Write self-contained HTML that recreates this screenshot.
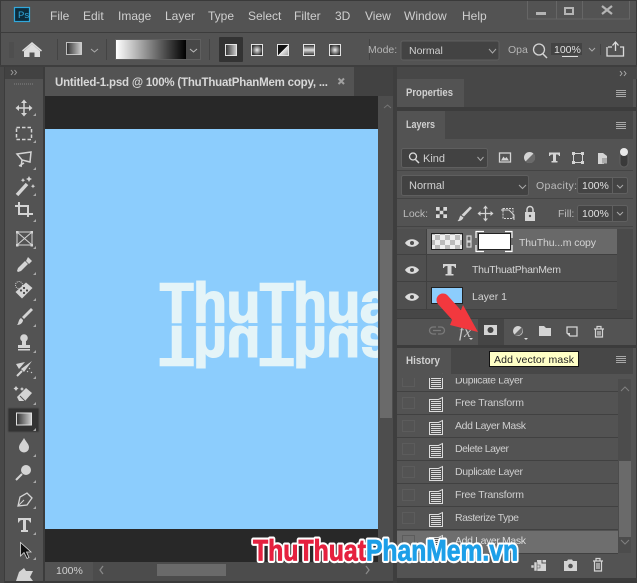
<!DOCTYPE html>
<html><head><meta charset="utf-8"><style>
html,body{margin:0;padding:0;background:#535353;width:637px;height:583px;overflow:hidden}
svg{display:block}
text{font-family:"Liberation Sans",sans-serif;font-size:11px;fill:#d0d0d0}
.m{font-size:12px;fill:#cfcfcf}
.b{font-weight:bold}
.i{fill:#d4d4d4;stroke:none}
.s{fill:none;stroke:#d4d4d4;stroke-width:1.5}
</style></head><body>
<svg width="637" height="583" viewBox="0 0 637 583" xmlns="http://www.w3.org/2000/svg">
<rect width="637" height="583" fill="#535353"/>
<rect x="0" y="0" width="637" height="1" fill="#3a3a3a"/>
<rect x="0" y="0" width="1" height="583" fill="#3a3a3a"/>
<rect x="636" y="0" width="1" height="583" fill="#3a3a3a"/>
<rect x="0" y="581" width="637" height="2" fill="#3a3a3a"/>
<!-- title/menu -->
<rect x="14.500" y="7.500" width="15" height="14" fill="#0c2c3c" stroke="#31a8dc" stroke-width="1.200"/>
<text x="18" y="18" style="font-size:9.500px;fill:#31a8dc">Ps</text>
<text class="m" x="50" y="20">File</text><text class="m" x="83" y="20">Edit</text><text class="m" x="118" y="20">Image</text><text class="m" x="165" y="20">Layer</text><text class="m" x="208" y="20">Type</text><text class="m" x="248" y="20">Select</text><text class="m" x="294" y="20">Filter</text><text class="m" x="335" y="20">3D</text><text class="m" x="365" y="20">View</text><text class="m" x="404" y="20">Window</text><text class="m" x="462" y="20">Help</text>
<path d="M527.500 1V19H629.500V1M556.500 1V19M582.500 1V19" fill="none" stroke="#666"/>
<rect x="536" y="12" width="10" height="3" fill="#b4b4b4"/>
<rect x="565" y="8" width="8" height="6" fill="none" stroke="#b4b4b4" stroke-width="2"/>
<path d="M602 6L612 14M612 6L602 14" stroke="#b4b4b4" stroke-width="2.200" fill="none"/>
<rect x="0" y="32" width="637" height="1" fill="#3c3c3c"/>
<!-- options -->
<path d="M9 43h5M9 45h5M9 47h5M9 49h5M9 51h5M9 53h5M9 55h5M9 57h5" stroke="#484848" stroke-width="1"/>
<path d="M32 44L24 51V57H29.500V52.500H34.500V57H40V51Z" fill="#dcdcdc"/><path d="M22.500 51L32 43L41.500 51" fill="none" stroke="#dcdcdc" stroke-width="1.500"/>
<path d="M57.500 39V60M106.500 39V60M209.500 39V60M369.500 39V60" stroke="#444"/>
<defs>
<linearGradient id="g1"><stop offset="0" stop-color="#fff"/><stop offset="1" stop-color="#000"/></linearGradient>
<linearGradient id="g2"><stop offset="0" stop-color="#303030"/><stop offset="1" stop-color="#d0d0d0"/></linearGradient>
<radialGradient id="g3"><stop offset="0" stop-color="#eee"/><stop offset="1" stop-color="#333"/></radialGradient>
<linearGradient id="g4" x1="0" y1="0" x2="0" y2="1"><stop offset="0" stop-color="#222"/><stop offset=".5" stop-color="#ddd"/><stop offset="1" stop-color="#222"/></linearGradient>
<linearGradient id="g5" x1="0" y1="0" x2="1" y2="1"><stop offset="0" stop-color="#111"/><stop offset=".5" stop-color="#111"/><stop offset=".5" stop-color="#eee"/><stop offset="1" stop-color="#999"/></linearGradient>
<pattern id="ck" width="10" height="10" patternUnits="userSpaceOnUse"><rect width="10" height="10" fill="#eee"/><rect width="5" height="5" fill="#bbb"/><rect x="5" y="5" width="5" height="5" fill="#bbb"/></pattern>
</defs>
<rect x="66.500" y="42.500" width="15" height="12" fill="url(#g2)" stroke="#ddd" stroke-width=".8"/>
<path d="M91 49L94.500 52L98 49" stroke="#aaa" fill="none"/>
<rect x="115.500" y="39.500" width="85" height="20" fill="#484848" stroke="#5f5f5f"/>
<rect x="116" y="40" width="70" height="19" fill="url(#g1)"/>
<path d="M190 49L193.500 52L197 49" stroke="#bbb" fill="none"/>
<rect x="219" y="37" width="24" height="25" rx="1" fill="#333"/>
<rect x="225.500" y="44.500" width="11" height="11" fill="url(#g2)" stroke="#e4e4e4"/>
<rect x="251.500" y="44.500" width="11" height="11" fill="url(#g3)" stroke="#e4e4e4"/>
<rect x="277.500" y="44.500" width="11" height="11" fill="url(#g5)" stroke="#e4e4e4"/>
<rect x="303.500" y="44.500" width="11" height="11" fill="url(#g4)" stroke="#e4e4e4"/>
<rect x="329.500" y="44.500" width="11" height="11" fill="url(#g3)" stroke="#e4e4e4"/>
<text x="368" y="53" style="font-size:10.500px;fill:#b4b4b4">Mode:</text>
<rect x="401" y="41" width="98" height="19" rx="2" fill="#434343" stroke="#5f5f5f"/>
<text x="409" y="54" style="font-size:10.500px;fill:#d0d0d0">Normal</text>
<path d="M489 49L492.500 53L496 49" stroke="#aaa" fill="none"/>
<text x="508" y="53" style="font-size:10.500px;fill:#b4b4b4">Opa</text>
<circle cx="539" cy="49.500" r="5.500" fill="none" stroke="#d4d4d4" stroke-width="1.300"/><path d="M543 54L547 58" stroke="#d4d4d4" stroke-width="1.500"/>
<rect x="551" y="43" width="31" height="12" fill="#434343"/>
<text x="554" y="53" style="font-size:10.500px;fill:#e0e0e0">100%</text>
<path d="M562 56.500H578" stroke="#ddd"/>
<path d="M589 48L592 51L595 48" stroke="#aaa" fill="none"/>
<path d="M600.500 44V55" stroke="#444"/>
<path d="M608 47H612M620 47H623.500V56H607V47" fill="none" stroke="#dcdcdc" stroke-width="1.300"/><path d="M615.500 51V43M612.500 45.500L615.500 42L618.500 45.500" fill="none" stroke="#dcdcdc" stroke-width="1.300"/>
<rect x="0" y="65" width="637" height="2" fill="#3e3e3e"/>
<!-- left tools -->
<rect x="0" y="67" width="4" height="516" fill="#484848"/>
<rect x="4" y="67" width="1" height="516" fill="#3c3c3c"/>
<rect x="5" y="67" width="39" height="12" fill="#424242"/>
<path d="M11 70L13 72.500L11 75M14.500 70L16.500 72.500L14.500 75" fill="none" stroke="#9a9a9a"/>
<path d="M14 84h20" stroke="#6b6b6b" stroke-width="2" stroke-dasharray="1 1"/>
<rect x="43" y="67" width="2" height="516" fill="#3c3c3c"/>
<g>
<path class="s" d="M24 101V115M17 108H31"/><path class="i" d="M24 99.500L27 103H21ZM24 116.500L27 113H21ZM15.500 108L19 105V111ZM32.500 108L29 105V111Z"/>
<rect x="16.500" y="127.500" width="15" height="12" fill="none" stroke="#d4d4d4" stroke-width="1.500" stroke-dasharray="3.500 2"/>
<path class="s" d="M17 154L31 152L30 162L22 160L17 154ZM22 160L21 167M24 163L19 166"/>
<path d="M17 195L27 184" stroke="#d4d4d4" stroke-width="3.500"/><path class="i" d="M29 176l1 2 2 1-2 1-1 2-1-2-2-1 2-1zM23 178l.7 1.500 1.500.7-1.500.7-.7 1.500-.7-1.500-1.500-.7 1.500-.7zM33 184l.7 1.500 1.500.7-1.500.7-.7 1.500-.7-1.500-1.500-.7 1.500-.7z"/>
<path class="s" d="M15 206H28V217M19 202V214H33" style="stroke-width:2"/>
<rect x="17" y="232" width="15" height="13" fill="none" stroke="#d4d4d4"/><path d="M17 232L32 245M32 232L17 245" stroke="#d4d4d4"/><rect x="16" y="231" width="2.500" height="2.500" class="i"/><rect x="30.500" y="231" width="2.500" height="2.500" class="i"/><rect x="16" y="244" width="2.500" height="2.500" class="i"/><rect x="30.500" y="244" width="2.500" height="2.500" class="i"/>
<path class="i" d="M28 257L32 261L29 264L26 261ZM25 261L28 264L21 271L18 272L17 271L18 268Z"/>
<path class="i" d="M15.500 292L26 282.500L32.500 288L22 298.500Z"/><path d="M21 290.500h.01M24 288h.01M24 293h.01M27 290.500h.01" stroke="#444" stroke-width="2.200" stroke-linecap="round"/><circle cx="19" cy="285" r="3.500" fill="none" stroke="#d4d4d4" stroke-dasharray="1 1"/>
<path class="i" d="M31 308L33 310L24 319L22 317ZM21 318L23 320C23 323 20 325 17 325C19 323 18 320 21 318Z"/>
<circle class="i" cx="24" cy="338" r="3.800"/><rect class="i" x="22" y="340" width="4" height="5"/><rect class="i" x="18" y="345" width="12" height="3"/><rect class="i" x="18" y="349" width="12" height="1.500"/>
<path class="i" d="M16 364L25 362L19 369ZM32 361L24 372L21 369Z"/><path d="M17 376L22 371" stroke="#d4d4d4" stroke-width="2"/><path d="M27 371l1 1M29 368l1 1M31 372l1 1" stroke="#d4d4d4"/>
<path class="i" d="M26 388L32 393L25 401L19 401L17 397Z"/><path class="i" d="M16 386l1 1.500 1.500 1-1.500 1-1 1.500-1-1.500-1.500-1 1.500-1zM22 387l.7 1.300 1.300.7-1.300.7-.7 1.300-.7-1.300-1.300-.7 1.300-.7z"/><path d="M20 396L25 401" stroke="#535353"/>
<rect x="8" y="408" width="31" height="24" rx="1" fill="#333" stroke="#4a4a4a"/>
<rect x="16.500" y="413" width="15" height="12" fill="url(#g2)" stroke="#e0e0e0"/>
<path class="i" d="M24 438C26 442 29 444 29 447.500A5 5 0 0 1 19 447.500C19 444 22 442 24 438Z"/>
<circle class="i" cx="26" cy="470" r="5"/><path d="M22 474L16 480" stroke="#d4d4d4" stroke-width="2"/>
<path class="s" d="M18 506L20 497L27 493L32 498L27 505Z" style="stroke-width:1.300"/><path d="M18 506L24 500" stroke="#d4d4d4"/>
<path class="i" d="M18 518H31V522.500H30C29.500 520.500 28.500 520 26 520V530H28V532H21V530H23V520C20.500 520 19.500 520.500 19 522.500H18Z"/>
<path d="M20.500 542.500V556L24 552.500L27 558.500L29 557.500L26.500 552H31Z" fill="#111" stroke="#ddd" stroke-width=".8"/>
<path class="i" d="M16 581L19 572L24 568L26 571L33 571L30 577L33 581Z"/>
</g>
<path d="M36 113l-3 3h3zM36 140l-3 3h3zM36 167l-3 3h3zM36 193l-3 3h3zM36 219l-3 3h3zM36 246l-3 3h3zM36 272l-3 3h3zM36 298l-3 3h3zM36 324l-3 3h3zM36 350l-3 3h3zM36 376l-3 3h3zM36 402l-3 3h3zM36 428l-3 3h3zM36 454l-3 3h3zM36 480l-3 3h3zM36 506l-3 3h3zM36 532l-3 3h3zM36 557l-3 3h3z" fill="#a8a8a8"/>
<!-- tabs -->
<rect x="45" y="67" width="348" height="29" fill="#424242"/>
<rect x="45" y="67" width="309" height="29" fill="#535353"/>
<text x="55" y="86" class="b" textLength="273" lengthAdjust="spacing" style="font-size:11.500px;fill:#d8d8d8">Untitled-1.psd @ 100% (ThuThuatPhanMem copy, ...</text>
<path d="M338.500 78.500L344 84M344 78.500L338.500 84" stroke="#a0a0a0" stroke-width="2"/>
<!-- doc -->
<rect x="45" y="96" width="333" height="466" fill="#282828"/>
<rect x="45" y="129" width="333" height="400" fill="#8ccdfd"/>
<svg x="45" y="129" width="333" height="400" viewBox="45 129 333 400" overflow="hidden">
<text transform="translate(160,322) scale(.975,1)" style="font-weight:bold;font-size:56px;fill:#e4f4f8;stroke:#e4f4f8;stroke-width:2px">ThuThua</text>
<text transform="translate(160,327) scale(.975,-1)" style="font-weight:bold;font-size:56px;fill:#e4f4f8;stroke:#e4f4f8;stroke-width:2px">ThuThua</text>
</svg>
<!-- vertical scroll -->
<rect x="378" y="96" width="15" height="466" fill="#4d4d4d"/>
<path d="M384 108L387.500 105L391 108" stroke="#757575" fill="none"/>
<rect x="380" y="240" width="12" height="178" fill="#6a6a6a"/>
<!-- status -->
<rect x="45" y="562" width="348" height="19" fill="#4c4c4c"/>
<rect x="45" y="562" width="48" height="19" fill="#535353"/>
<text x="56" y="574" style="font-size:10.500px;fill:#d0d0d0">100%</text>
<path d="M103 566L100 570L103 574" stroke="#888" fill="none" stroke-width="1.300"/>
<path d="M366 566L369 570L366 574" stroke="#888" fill="none" stroke-width="1.300"/>
<rect x="157" y="564" width="69" height="12" fill="#6a6a6a"/>
<rect x="393" y="67" width="4" height="516" fill="#3e3e3e"/>
<!-- right panels -->
<rect x="397" y="67" width="240" height="12" fill="#474747"/>
<path d="M620 71L622 73.500L620 76M624 71L626 73.500L624 76" fill="none" stroke="#a8a8a8"/>
<rect x="397" y="79" width="236" height="28" fill="#474747"/>
<rect x="397" y="79" width="67" height="28" fill="#535353"/>
<text class="b" x="406" y="96" textLength="47" lengthAdjust="spacingAndGlyphs">Properties</text>
<path d="M616 90.500H626M616 92.500H626M616 94.500H626M616 96.500H626" stroke="#a8a8a8"/>
<rect x="397" y="107" width="240" height="4" fill="#3c3c3c"/>
<rect x="397" y="111" width="236" height="28" fill="#474747"/>
<rect x="397" y="111" width="48" height="28" fill="#535353"/>
<text class="b" x="406" y="128" textLength="29" lengthAdjust="spacingAndGlyphs">Layers</text>
<path d="M616 122.500H626M616 124.500H626M616 126.500H626M616 128.500H626" stroke="#a8a8a8"/>
<!-- kind -->
<rect x="401.500" y="148.500" width="86" height="19" rx="2" fill="#424242" stroke="#5f5f5f"/>
<circle cx="413" cy="156.500" r="3.500" fill="none" stroke="#dcdcdc" stroke-width="1.300"/><path d="M415.500 159.500L419 163" stroke="#dcdcdc" stroke-width="1.500"/>
<text x="423" y="162" style="font-size:11px">Kind</text>
<path d="M477.500 157L480.500 160.500L483.500 157" stroke="#aaa" fill="none"/>
<rect x="499.500" y="153" width="11" height="9" fill="none" stroke="#d4d4d4" stroke-width="1.300"/><path class="i" d="M501 160.500L503.500 156.500L505 158.500L506.500 157L509 160.500Z"/>
<circle cx="529.500" cy="157.500" r="5.500" fill="#d4d4d4"/><path d="M525.500 161.500L533.500 153.500A5.500 5.500 0 0 1 525.500 161.500Z" fill="#6a6a6a"/>
<path class="i" d="M549 152.500H560V156H559C558.800 154.800 558 154.500 556 154.500V161H557.500V162.500H551.500V161H553V154.500C551 154.500 550.200 154.800 550 156H549Z"/>
<rect x="573.500" y="153.500" width="9" height="9" fill="none" stroke="#d4d4d4"/><path class="i" d="M572 152h3v3h-3zM581 152h3v3h-3zM572 161h3v3h-3zM581 161h3v3h-3z"/>
<path class="i" d="M598 153H603L607 156V160H604V164H598Z"/><rect x="602" y="158" width="5" height="5.500" fill="#aaa"/>
<rect x="620" y="152" width="8" height="15" rx="4" fill="#3a3a3a" stroke="#606060"/><circle cx="624" cy="152" r="4" fill="#e8e8e8"/>
<rect x="397" y="170" width="236" height="1" fill="#444"/>
<!-- normal -->
<rect x="401.500" y="175.500" width="127" height="20" rx="2" fill="#424242" stroke="#5f5f5f"/>
<text x="409" y="189" style="font-size:11px">Normal</text>
<path d="M519 185L522.500 188.500L526 185" stroke="#aaa" fill="none"/>
<text x="536" y="189" style="font-size:10.500px;fill:#bcbcbc" textLength="41">Opacity:</text>
<rect x="577.500" y="177.500" width="50" height="16" rx="2" fill="#444" stroke="#606060"/><path d="M612.500 178V193" stroke="#606060"/>
<text x="582" y="189" style="font-size:10.500px;fill:#e0e0e0">100%</text>
<path d="M617 185L620 188L623 185" stroke="#aaa" fill="none"/>
<rect x="397" y="198" width="236" height="1" fill="#444"/>
<!-- lock -->
<text x="403" y="217" style="font-size:10.500px;fill:#bcbcbc">Lock:</text>
<rect x="436" y="207" width="11" height="11" fill="#d8d8d8"/><path d="M439.700 207h3.600v3.700h-3.600zM436 210.700h3.700v3.600h-3.700zM443.300 210.700h3.700v3.600h-3.700zM439.700 214.300h3.600v3.700h-3.600z" fill="#444"/>
<path class="i" d="M470 206.500L472 208L464 216.500L461.500 215Z"/><path class="i" d="M460.500 215.500L463.500 217.500C462.500 220.500 459 221.500 457.500 221C459.500 219.500 459 217.500 460.500 215.500Z"/>
<path class="s" d="M485.500 207V220M479 213.500H492" style="stroke-width:1.200"/><path class="i" d="M485.500 205.500L488 208.500H483ZM485.500 221.500L488 218.500H483ZM477.500 213.500L480.500 211V216ZM493.500 213.500L490.500 211V216Z"/>
<path d="M503 208.500H513V218.500H503Z" fill="none" stroke="#d4d4d4" stroke-dasharray="2 1"/><path d="M501 210H509L514 215V220" fill="none" stroke="#d4d4d4"/>
<path class="i" d="M525 212H535V221H525Z"/><path d="M527 212V209.500A3 3 0 0 1 533 209.500V212" fill="none" stroke="#d4d4d4" stroke-width="1.500"/><circle cx="530" cy="216" r="1.200" fill="#535353"/>
<text x="558" y="217" style="font-size:10.500px;fill:#bcbcbc">Fill:</text>
<rect x="577.500" y="205.500" width="50" height="16" rx="2" fill="#444" stroke="#606060"/><path d="M612.500 206V221" stroke="#606060"/>
<text x="582" y="217" style="font-size:10.500px;fill:#e0e0e0">100%</text>
<path d="M617 212L620 215L623 212" stroke="#aaa" fill="none"/>
<!-- layers list -->
<rect x="397" y="226" width="236" height="1" fill="#444"/>
<rect x="397" y="229" width="220" height="81" fill="#4f4f4f"/>
<rect x="427" y="229" width="190" height="25" fill="#696969"/>
<path d="M397 254.500H617M397 281.500H617M397 309.500H617M426.500 229V309" stroke="#404040"/>
<rect x="617" y="229" width="16" height="81" fill="#4a4a4a"/>
<g fill="#dcdcdc"><path d="M405 243C408 238 416 238 419 243C416 248 408 248 405 243Z"/><circle cx="412" cy="243" r="2" fill="#4f4f4f"/>
<path d="M405 270C408 265 416 265 419 270C416 275 408 275 405 270Z"/><circle cx="412" cy="270" r="2" fill="#4f4f4f"/>
<path d="M405 297C408 292 416 292 419 297C416 302 408 302 405 297Z"/><circle cx="412" cy="297" r="2" fill="#4f4f4f"/></g>
<rect x="431.500" y="233.500" width="31" height="16" fill="url(#ck)" stroke="#222"/>
<path d="M467 236H471V241H467ZM467 242H471V247H467Z" fill="none" stroke="#d4d4d4" stroke-width="1.200"/>
<rect x="478.500" y="233.500" width="32" height="16" fill="#fff" stroke="#222"/>
<path d="M476 238V231.500H484M505 231.500H512V238M476 245V251.500H484M505 251.500H512V245" fill="none" stroke="#fff" stroke-width="1.200"/>
<text x="519" y="246" style="fill:#d4d4d4;font-size:10.500px" textLength="77">ThuThu...m copy</text>
<path class="i" d="M443 264H456V268H455C454.700 266.500 454 266 451.500 266V274H453.500V275.500H445.500V274H447.500V266C445 266 444.300 266.500 444 268H443Z"/>
<text x="472" y="273" style="fill:#d4d4d4;font-size:10.500px" textLength="89">ThuThuatPhanMem</text>
<rect x="431.500" y="287.500" width="31" height="16" fill="#8ccdfd" stroke="#222"/>
<text x="472" y="300" style="fill:#d4d4d4;font-size:10.500px">Layer 1</text>
<!-- layers footer -->
<rect x="397" y="310" width="236" height="8" fill="#474747"/>
<rect x="397" y="318" width="236" height="1" fill="#3e3e3e"/>
<rect x="478" y="319" width="26" height="26" fill="#454545"/>
<rect x="397" y="345" width="240" height="3" fill="#3c3c3c"/>
<path d="M436 327H433A3.500 3.500 0 0 0 433 334H436M438 327H441A3.500 3.500 0 0 1 441 334H438M433 330.500H441" fill="none" stroke="#7a7a7a" stroke-width="1.300"/>
<text x="459" y="337" style="font-family:'Liberation Serif',serif;font-style:italic;font-size:16px;fill:#c8c8c8;letter-spacing:.5px">fx</text>
<path d="M469 338h4l-2 2z" fill="#ddd"/>
<rect x="484" y="325" width="13" height="10" fill="#d4d4d4"/><circle cx="490.500" cy="330" r="3" fill="#444"/>
<circle cx="518" cy="331" r="5" fill="#d4d4d4"/><path d="M514.500 334.500L521.500 327.500A5 5 0 0 1 514.500 334.500Z" fill="#666"/>
<path d="M524 338h4l-2 2z" fill="#ddd"/>
<path class="i" d="M539 326H544L546 328H551V336H539Z"/>
<path d="M567 327H577V336H570L567 333Z" fill="none" stroke="#d4d4d4" stroke-width="1.300"/><path class="i" d="M567 333H570V336Z"/>
<path d="M594 329H604M597 329V326.500H601V329M595.500 329V337H602.500V329M598 331V335.500M600 331V335.500" fill="none" stroke="#d4d4d4" stroke-width="1.200"/>
<!-- arrow -->
<path d="M447.400 295.200L460.900 310.200L463 305L478 332L450 325L452.100 319.800L438.600 304.800A6.500 6.500 0 0 1 447.400 295.200Z" fill="#f2383e"/>
<!-- history -->
<rect x="397" y="348" width="236" height="26" fill="#474747"/>
<rect x="397" y="348" width="54" height="26" fill="#535353"/>
<text class="b" x="406" y="364" textLength="34" lengthAdjust="spacingAndGlyphs">History</text>
<path d="M616 356.500H626M616 358.500H626M616 360.500H626M616 362.500H626" stroke="#a8a8a8"/>
<rect x="397" y="374" width="221" height="179" fill="#535353"/>
<rect x="397" y="531" width="221" height="22" fill="#6e6e6e"/>
<path d="M397 391.500H618M397 414.500H618M397 437.500H618M397 460.500H618M397 483.500H618M397 506.500H618M397 529.500H618" stroke="#414141"/>
<g fill="none" stroke="#5c5c5c"><rect x="402.500" y="375.500" width="12" height="11"/><rect x="402.500" y="397.500" width="12" height="11"/><rect x="402.500" y="420.500" width="12" height="11"/><rect x="402.500" y="443.500" width="12" height="11"/><rect x="402.500" y="466.500" width="12" height="11"/><rect x="402.500" y="489.500" width="12" height="11"/><rect x="402.500" y="512.500" width="12" height="11"/><rect x="402.500" y="535.500" width="12" height="11"/></g>
<defs><g id="doc"><path d="M0.500 2.500H9.500L13.500 0.500V14.500H0.500Z" fill="#535353" stroke="#dcdcdc"/><path d="M2 4.500H12M2 6.500H12M2 8.500H12M2 10.500H12M2 12.500H12" stroke="#dcdcdc"/></g></defs>
<use href="#doc" x="429" y="374"/><use href="#doc" x="429" y="397"/><use href="#doc" x="429" y="420"/><use href="#doc" x="429" y="443"/><use href="#doc" x="429" y="466"/><use href="#doc" x="429" y="489"/><use href="#doc" x="429" y="512"/><use href="#doc" x="429" y="535"/>
<text x="455" y="383.500" style="font-size:10.500px;fill:#cfcfcf" textLength="68">Duplicate Layer</text>
<rect x="397" y="374" width="221" height="4" fill="#535353"/>
<text x="455" y="406" style="font-size:10.500px;fill:#cfcfcf" textLength="69">Free Transform</text>
<text x="455" y="429" style="font-size:10.500px;fill:#cfcfcf" textLength="71">Add Layer Mask</text>
<text x="455" y="452" style="font-size:10.500px;fill:#cfcfcf" textLength="54">Delete Layer</text>
<text x="455" y="475" style="font-size:10.500px;fill:#cfcfcf" textLength="68">Duplicate Layer</text>
<text x="455" y="498" style="font-size:10.500px;fill:#cfcfcf" textLength="69">Free Transform</text>
<text x="455" y="521" style="font-size:10.500px;fill:#cfcfcf" textLength="64">Rasterize Type</text>
<text x="455" y="544" style="font-size:10.500px;fill:#dcdcdc" textLength="71">Add Layer Mask</text>
<rect x="618" y="379" width="13" height="174" fill="#4c4c4c"/>
<rect x="619" y="461" width="12" height="76" fill="#6a6a6a"/>
<path d="M621 391L625 387L629 391M621 540L625 544L629 540" stroke="#808080" fill="none"/>
<rect x="397" y="553" width="236" height="25" fill="#535353"/>
<rect x="397" y="553" width="221" height="1" fill="#414141"/>
<rect x="397" y="578" width="240" height="3" fill="#3c3c3c"/>
<path class="i" d="M537 560H546V571H537Z"/><path d="M531 565H540V568H531Z" fill="#d4d4d4" stroke="#535353" stroke-width=".6"/><path d="M534 562H537V571H534Z" fill="#d4d4d4" stroke="#535353" stroke-width=".6"/><path d="M542 559V563H546" fill="none" stroke="#535353"/>
<path class="i" d="M564 561H567L568 559.500H572L573 561H577V571H564Z"/><circle cx="570.500" cy="566" r="2.800" fill="#535353" stroke="#d4d4d4"/>
<path d="M593 561H603M596 561V558.500H600V561M594.500 561V571H601.500V561M597 563V569M599 563V569" fill="none" stroke="#d4d4d4" stroke-width="1.200"/>
<!-- tooltip -->
<rect x="489.500" y="351.500" width="89" height="15" fill="#ffffc6" stroke="#111"/>
<text x="494" y="363" style="font-size:10.500px;fill:#222" textLength="80">Add vector mask</text>
<!-- watermark -->
<text x="253" y="560.500" textLength="113" lengthAdjust="spacingAndGlyphs" style="font-weight:bold;font-size:30px;fill:#fff;stroke:#fff;stroke-width:5px;stroke-linejoin:round">ThuThuat</text>
<text x="366" y="560.500" textLength="152" lengthAdjust="spacingAndGlyphs" style="font-weight:bold;font-size:30px;fill:#fff;stroke:#fff;stroke-width:5px;stroke-linejoin:round">PhanMem.vn</text>
<text x="253" y="560.500" textLength="113" lengthAdjust="spacingAndGlyphs" style="font-weight:bold;font-size:30px;fill:#e5213f;stroke:#e5213f;stroke-width:.8px">ThuThuat</text>
<text x="366" y="560.500" textLength="152" lengthAdjust="spacingAndGlyphs" style="font-weight:bold;font-size:30px;fill:#1c9fe8;stroke:#1c9fe8;stroke-width:.8px">PhanMem.vn</text>
</svg>
</body></html>
